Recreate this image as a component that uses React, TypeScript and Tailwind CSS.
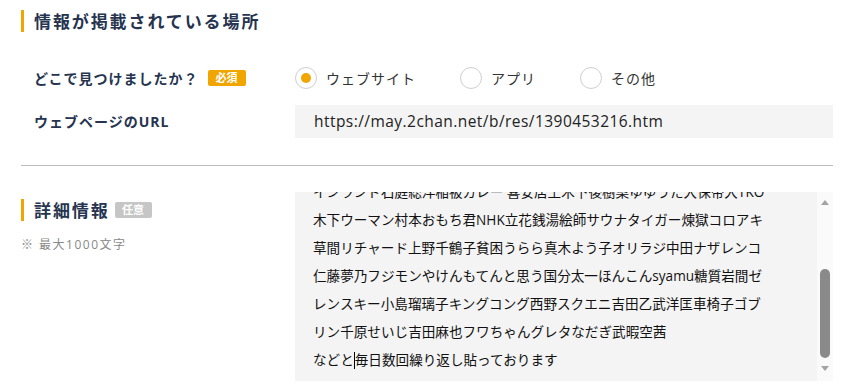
const jp = "font-['Open_Sans','Noto_Sans_CJK_JP',sans-serif]";

const detailLines = [
    "インランド石庭総洋稲被カレー 喜安居王木下後樹案ゆゆうた大保帝大TKO",
    "木下ウーマン村本おもち君NHK立花銭湯絵師サウナタイガー煉獄コロアキ",
    "草間リチャード上野千鶴子貧困うらら真木よう子オリラジ中田ナザレンコ",
    "仁藤夢乃フジモンやけんもてんと思う国分太一ほんこんsyamu糖質岩間ゼ",
    "レンスキー小島瑠璃子キングコング西野スクエニ吉田乙武洋匡車椅子ゴブ",
    "リン千原せいじ吉田麻也フワちゃんグレタなだぎ武暇空茜",
];

function SectionTitle(props: { title: string; badge?: string }) {
    return (
        <div className="flex items-center h-[22px]">
            <div className="w-[3px] h-[22px] bg-[#f0a500]"></div>
            <h2 className="ml-[10px] text-[17px] font-bold tracking-[1.9px] text-[#26344f] leading-none">
                {props.title}
            </h2>
            {props.badge && (
                <span className="ml-[5px] h-[16px] w-[37px] flex items-center justify-center rounded-[2px] bg-[#c6c6c6] text-white text-[11px] font-bold">
                    {props.badge}
                </span>
            )}
        </div>
    );
}

function Radio(props: { label: string; checked?: boolean; width: string }) {
    return (
        <label className={`flex items-center ${props.width}`}>
            <span className="w-[22px] h-[22px] rounded-full border border-[#cfcfcf] bg-white flex items-center justify-center">
                {props.checked && <span className="w-[10px] h-[10px] rounded-full bg-[#f0a500]"></span>}
            </span>
            <span className="ml-[9px] text-[14px] tracking-[1px] text-[#333]">{props.label}</span>
        </label>
    );
}

export default function App() {
    return (
        <div className={`w-[848px] h-[390px] overflow-hidden bg-white pl-[21px] pr-[15px] pt-[10px] ${jp}`}>
            {/* 情報が掲載されている場所 */}
            <SectionTitle title="情報が掲載されている場所" />

            <div className="mt-[34px] flex items-center h-[24px]">
                <div className="w-[274px] pl-[13px] flex items-center">
                    <span className="text-[14px] font-bold tracking-[1px] text-[#26344f]">どこで見つけましたか？</span>
                    <span className="ml-[9px] h-[16px] w-[38px] flex items-center justify-center rounded-[2px] bg-[#f0a500] text-white text-[11px] font-bold">
                        必須
                    </span>
                </div>
                <div className="flex items-center">
                    <Radio label="ウェブサイト" checked width="w-[165px]" />
                    <Radio label="アプリ" width="w-[120px]" />
                    <Radio label="その他" width="w-[120px]" />
                </div>
            </div>

            <div className="mt-[15px] flex items-center">
                <div className="w-[274px] pl-[13px] text-[14px] font-bold tracking-[1px] text-[#26344f]">
                    ウェブページのURL
                </div>
                <div className="flex-1 h-[33px] bg-[#f4f4f4] flex items-center pl-[19px] text-[15.5px] tracking-[0.45px] text-[#222]">
                    https://may.2chan.net/b/res/1390453216.htm
                </div>
            </div>

            <div className="mt-[27px] h-px bg-[#bdbdbd]"></div>

            {/* 詳細情報 */}
            <div className="mt-[26px] flex">
                <div className="w-[274px] pt-[7px]">
                    <SectionTitle title="詳細情報" badge="任意" />
                    <p className="mt-[15px] text-[12px] tracking-[1.5px] text-[#888]">※ 最大1000文字</p>
                </div>
                <div className="flex-1 h-[189px] bg-[#f4f4f4] flex overflow-hidden">
                    <div className="flex-1 overflow-hidden pl-[18px]">
                        <div className="-mt-[14px] text-[13.6px] leading-[28px] text-[#111] whitespace-nowrap">
                            {detailLines.map((line, i) => (
                                <div key={i}>{line}</div>
                            ))}
                            <div>
                                などと<span className="inline-block w-px h-[17px] bg-black align-middle -mt-[2px]"></span>毎日数回繰り返し貼っております
                            </div>
                        </div>
                    </div>
                    {/* scrollbar */}
                    <div className="w-[16px] bg-[#fafafa] flex flex-col items-center">
                        <svg width="8" height="6" viewBox="0 0 8 6" className="mt-[7px]">
                            <path d="M0 6 L4 1 L8 6 Z" fill="#a3a3a3" />
                        </svg>
                        <div className="mt-[64px] w-[10px] h-[89px] rounded-full bg-[#8a8a8a]"></div>
                        <svg width="8" height="6" viewBox="0 0 8 6" className="mt-[8px]">
                            <path d="M0 0 L8 0 L4 5 Z" fill="#a3a3a3" />
                        </svg>
                    </div>
                </div>
            </div>
        </div>
    );
}
